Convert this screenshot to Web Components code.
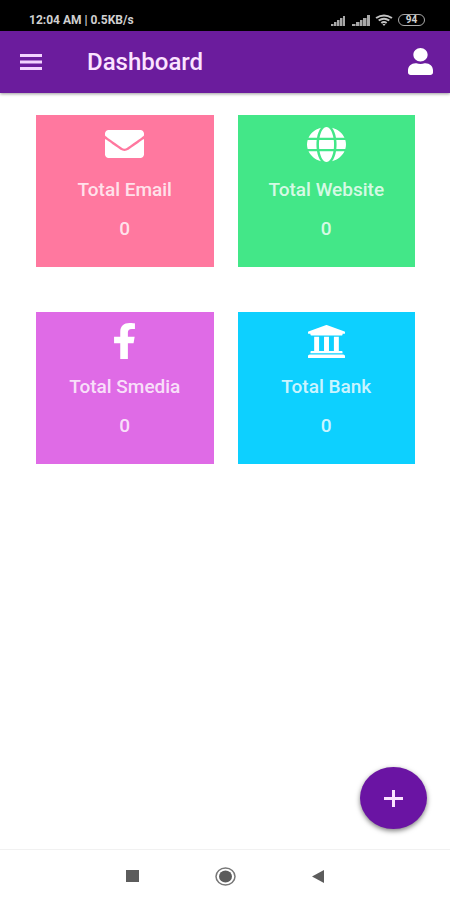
<!DOCTYPE html>
<html lang="en">
<head>
<meta charset="utf-8">
<meta name="viewport" content="width=device-width, initial-scale=1">
<title>Dashboard</title>
<style>
html, body { margin: 0; height: 100%; background: #fff; font-family: Roboto, "Liberation Sans", sans-serif; }
</style>
</head>
<body>
<dashboard-app></dashboard-app>
<script>
const define = (name, html) => {
  const template = document.createElement('template');
  template.innerHTML = html;
  customElements.define(name, class extends HTMLElement {
    constructor() {
      super();
      this.attachShadow({ mode: 'open' }).append(template.content.cloneNode(true));
    }
  });
};

define('status-bar', `
<style>
:host { display: flex; align-items: center; justify-content: space-between; box-sizing: border-box; height: 31px; padding: 9px 25px 0 29px; background: #000; color: #d0d0d0; font-size: 12px; line-height: 16px; font-weight: 700; }
.signs { display: flex; align-items: center; gap: 5px; }
svg { display: block; }
.battery { display: flex; align-items: center; justify-content: center; box-sizing: border-box; width: 27px; height: 12px; border: 1px solid #aaa; border-radius: 6px; font-size: 10px; line-height: 10px; font-weight: 700; }
</style>
<span>12:04 AM | 0.5KB/s</span>
<span class="signs">
  <svg width="16" height="11" viewBox="0 0 16 11" fill="#a8a8a8"><path d="M0 9h2v2H0zM3 7h2v4H3zM6 5h2v6H6zM9 3h2v8H9zM12 1h2v10h-2z"/><path d="M2 9h1v2H2zM5 7h1v4H5zM8 5h1v6H8zM11 3h1v8h-1z" fill="#555"/></svg>
  <svg width="18" height="11" viewBox="0 0 18 11" fill="#a8a8a8"><path d="M0 9h3v2H0zM4 7h3v4H4zM8 5h2v6H8zM11 3h3v8h-3zM15 0h3v11h-3z"/><path d="M3 9h1v2H3zM7 7h1v4H7zM10 5h1v6h-1zM14 3h1v8h-1z" fill="#555"/></svg>
  <svg width="18" height="12" viewBox="0 0 17 12" preserveAspectRatio="none" fill="none" stroke="#c4c4c4" stroke-width="2"><path d="M1 4q7.500-5 15 0M3.500 6.500q5-3.500 10 0M6 9q2.500-1.800 5 0"/><path d="M7 10h3l-1.500 2z" fill="#c4c4c4" stroke="none"/></svg>
  <span class="battery">94</span>
</span>`);

define('app-bar', `
<style>
:host { display: flex; align-items: center; box-sizing: border-box; height: 62px; padding: 0 17px 2px 19px; background: #6b1c9d; color: #fff; box-shadow: 0 1px 3px rgba(0,0,0,.4); position: relative; }
h1 { flex: 1; margin: 0; padding: 2px 0 0 44px; font-size: 24px; line-height: 30px; font-weight: 500; color: #fbe3ff; }
button { display: flex; padding: 0; border: 0; background: none; color: inherit; cursor: pointer; }
.menu { padding-top: 2px; }
</style>
<button class="menu" type="button" aria-label="Open menu"><svg width="24" height="16" viewBox="0 0 24 16" fill="#f2d3ff"><path d="M1 0h22v3H1zM1 6.500h22v3H1zM1 13h22v3H1z"/></svg></button>
<h1><slot></slot></h1>
<button type="button" aria-label="Account"><svg width="25" height="27" viewBox="0 0 448 512" preserveAspectRatio="none" fill="#fff"><path d="M224 256c70.700 0 128-57.300 128-128S294.700 0 224 0 96 57.300 96 128s57.300 128 128 128zm89.600 32h-16.700c-22.200 10.200-46.900 16-72.900 16s-50.600-5.800-72.900-16h-16.700C60.200 288 0 348.200 0 422.400V464c0 26.500 21.500 48 48 48h352c26.500 0 48-21.500 48-48v-41.600c0-74.200-60.200-134.400-134.400-134.400z"/></svg></button>`);

define('stat-card', `
<style>
:host { display: flex; flex-direction: column; align-items: center; padding: 8px 0 26px; background: var(--card-colour); color: rgba(255,255,255,.8); text-align: center; font-size: 19px; line-height: 24px; }
.icon { display: flex; align-items: center; height: 42px; margin-bottom: 13px; color: #fff; }
h2, p { margin: 0; font-size: inherit; font-weight: 500; }
p { margin-top: 15px; }
</style>
<div class="icon"><slot name="icon"></slot></div>
<h2><slot></slot></h2>
<p><slot name="value"></slot></p>`);

define('add-button', `
<style>
:host { display: block; width: 67px; height: 62px; }
button { display: flex; align-items: center; justify-content: center; width: 100%; height: 100%; padding: 0; border: 0; border-radius: 50%; background: #6a14a3; box-shadow: 0 2px 5px rgba(0,0,0,.5); cursor: pointer; }
</style>
<button type="button" aria-label="Add"><svg width="19" height="17" viewBox="0 0 19 17" fill="#fbe3ff"><path d="M8 0h3v7h8v3h-8v7H8v-7H0V7h8z"/></svg></button>`);

define('system-nav', `
<style>
:host { display: flex; align-items: center; justify-content: center; gap: 72px; box-sizing: border-box; height: 51px; padding-top: 2px; border-top: 1px solid #f1f1f1; background: #fff; }
button { display: flex; justify-content: center; width: 21px; padding: 0; border: 0; background: none; cursor: pointer; }
</style>
<button type="button" aria-label="Recent apps"><svg width="13" height="12" viewBox="0 0 13 12"><path d="M0 0h13v12H0z" fill="#5c5c5c"/></svg></button>
<button type="button" aria-label="Home"><svg width="21" height="19" viewBox="0 0 21 19"><ellipse cx="10.500" cy="9.500" rx="9.500" ry="8.500" fill="#fff" stroke="#777" stroke-width="1.500"/><ellipse cx="10.500" cy="9.500" rx="6.500" ry="6" fill="#5c5c5c"/></svg></button>
<button type="button" aria-label="Back"><svg width="13" height="13" viewBox="0 0 13 13"><path d="M12 0v13L0 6.500z" fill="#5c5c5c"/></svg></button>`);

define('dashboard-app', `
<style>
:host { display: flex; flex-direction: column; min-height: 100vh; }
main { flex: 1; display: flex; flex-direction: column; justify-content: space-between; padding: 22px 0 20px; }
.cards { display: grid; grid-template-columns: 1fr 1fr; gap: 45px 24px; padding: 0 35px 0 36px; }
add-button { align-self: flex-end; margin-right: 23px; }
svg { display: block; fill: #fff; }
</style>
<status-bar></status-bar>
<app-bar>Dashboard</app-bar>
<main>
  <section class="cards">
    <stat-card style="--card-colour:#ff789f">
      <svg slot="icon" width="39" height="28" viewBox="0 64 512 384" preserveAspectRatio="none"><path d="M502.300 190.800c3.900-3.100 9.700-.2 9.700 4.700V400c0 26.500-21.500 48-48 48H48c-26.500 0-48-21.500-48-48V195.600c0-5 5.700-7.800 9.700-4.700 22.400 17.400 52.100 39.500 154.100 113.600 21.100 15.400 56.700 47.800 92.200 47.600 35.700.3 72-32.800 92.300-47.600 102-74.100 131.600-96.300 154-113.700zM256 320c23.200.4 56.600-29.200 73.400-41.400 132.700-96.300 142.800-104.700 173.400-128.700 5.800-4.500 9.200-11.500 9.200-18.900v-19c0-26.500-21.500-48-48-48H48c-26.500 0-48 21.500-48 48v19c0 7.400 3.400 14.300 9.200 18.900 30.600 23.900 40.700 32.400 173.400 128.700 16.800 12.200 50.200 41.800 73.400 41.400z"/></svg>
      Total Email<span slot="value">0</span>
    </stat-card>
    <stat-card style="--card-colour:#43e788">
      <svg slot="icon" width="39" height="35" viewBox="0 8 496 496" preserveAspectRatio="none"><path d="M336.500 160C322 70.700 287.800 8 248 8s-74 62.700-88.500 152h177zM152 256c0 22.200 1.200 43.500 3.300 64h185.300c2.100-20.500 3.300-41.800 3.300-64s-1.200-43.500-3.300-64H155.300c-2.100 20.500-3.300 41.800-3.300 64zm324.700-96c-28.600-67.900-86.500-120.400-158-141.600 24.400 33.800 41.200 84.700 50 141.600h108zM177.200 18.400C105.800 39.600 47.800 92.100 19.300 160h108c8.700-56.900 25.500-107.800 49.900-141.600zM487.400 192H372.700c2.100 21 3.300 42.500 3.300 64s-1.200 43-3.300 64h114.600c5.500-20.500 8.600-41.800 8.600-64s-3.100-43.500-8.500-64zM120 256c0-21.500 1.200-43 3.300-64H8.600C3.200 212.500 0 233.800 0 256s3.200 43.500 8.600 64h114.600c-2-21-3.200-42.500-3.200-64zm39.500 96c14.500 89.300 48.700 152 88.500 152s74-62.700 88.500-152h-177zm159.300 141.600c71.400-21.200 129.400-73.700 158-141.600h-108c-8.800 56.900-25.600 107.800-50 141.600zM19.300 352c28.600 67.900 86.500 120.400 158 141.600-24.400-33.800-41.200-84.700-50-141.600h-108z"/></svg>
      Total Website<span slot="value">0</span>
    </stat-card>
    <stat-card style="--card-colour:#df6be6">
      <svg slot="icon" width="21" height="36" viewBox="22 0 276 512" preserveAspectRatio="none"><path d="M279.140 288l14.220-92.660h-88.910v-60.130c0-25.350 12.420-50.060 52.240-50.060h40.420V6.260S260.430 0 225.360 0c-73.220 0-121.080 44.380-121.080 124.720v70.620H22.890V288h81.390v224h100.170V288z"/></svg>
      Total Smedia<span slot="value">0</span>
    </stat-card>
    <stat-card style="--card-colour:#0dd0ff">
      <svg slot="icon" width="37" height="33" viewBox="16 32 480 448" preserveAspectRatio="none"><path d="M496 128v16a8 8 0 0 1-8 8h-24v12c0 6.627-5.373 12-12 12H60c-6.627 0-12-5.373-12-12v-12H24a8 8 0 0 1-8-8v-16a8 8 0 0 1 4.941-7.392l232-88a7.996 7.996 0 0 1 6.118 0l232 88A8 8 0 0 1 496 128zm-24 304H40c-13.255 0-24 10.745-24 24v16a8 8 0 0 0 8 8h464a8 8 0 0 0 8-8v-16c0-13.255-10.745-24-24-24zM96 192v192H60c-6.627 0-12 5.373-12 12v20h416v-20c0-6.627-5.373-12-12-12h-36V192h-64v192h-64V192h-64v192h-64V192H96z"/></svg>
      Total Bank<span slot="value">0</span>
    </stat-card>
  </section>
  <add-button></add-button>
</main>
<system-nav></system-nav>`);
</script>
</body>
</html>
